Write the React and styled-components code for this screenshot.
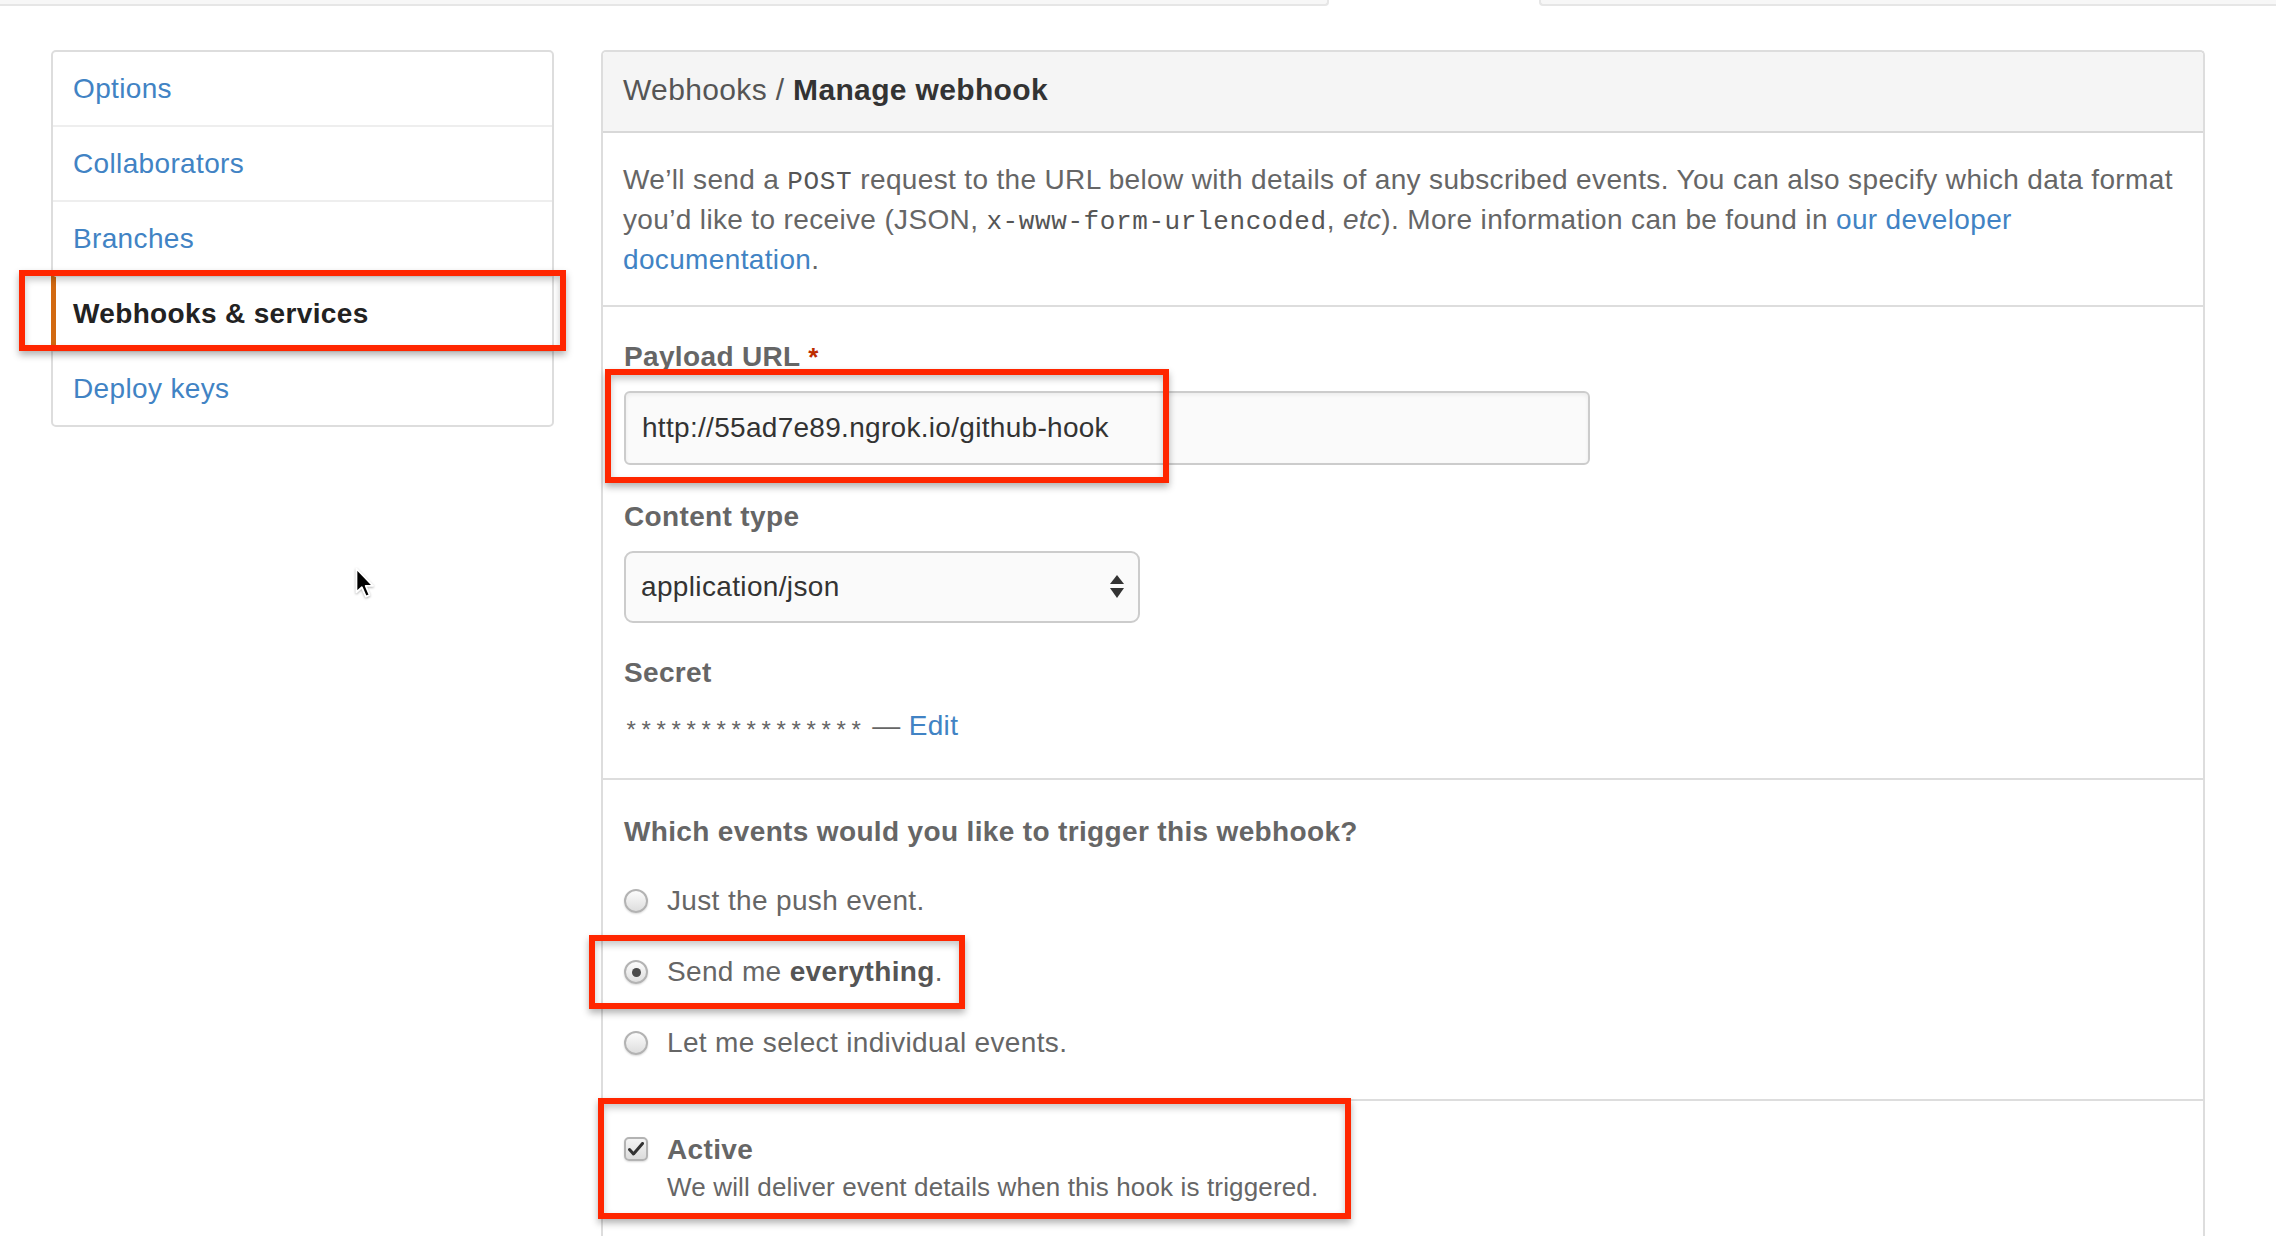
import React from 'react';
import styled, {createGlobalStyle} from 'styled-components';

const GlobalStyle = createGlobalStyle`
  html, body {
    margin: 0;
    padding: 0;
    background: #fff;
  }
  body {
    font-family: "Liberation Sans", Arial, sans-serif;
    font-size: 28px;
    letter-spacing: 0.35px;
    color: #666;
  }
  * {
    box-sizing: border-box;
  }
`;

const navItems = ['Options', 'Collaborators', 'Branches', 'Webhooks & services', 'Deploy keys'];

const App = () => {
    return (
        <Page>
            <GlobalStyle/>
            <TabEdge>
                <TabPiece $side='left'/>
                <TabPiece $side='right'/>
            </TabEdge>
            <Layout>
                <SideMenu>
                    {navItems.map((item, i) => (
                        <NavItem key={item} $selected={i === 3}>
                            {item}
                            {i === 3 && <Annotation $left={-37} $top={-7} $width={547} $height={81}/>}
                        </NavItem>
                    ))}
                </SideMenu>

                <Panel>
                    <PanelHeader>
                        <span>Webhooks /&nbsp;</span><strong>Manage webhook</strong>
                    </PanelHeader>

                    <Section $pad='28px 21px 27px 20px'>
                        <Description>
                            We’ll send a <Code>POST</Code> request to the URL below with details of any subscribed
                            events. You can also specify which data format you’d like to receive
                            (JSON, <Code>x-www-form-urlencoded</Code>, <em>etc</em>). More information can be found
                            in <Link>our developer documentation</Link>.
                        </Description>
                    </Section>

                    <Section $pad='31px 21px 33px'>
                        <Field $gap={33}>
                            <Label>Payload URL <Required>*</Required></Label>
                            <Anchor>
                                <TextInput readOnly value='http://55ad7e89.ngrok.io/github-hook'/>
                                <Annotation $left={-19} $top={-22} $width={564} $height={114}/>
                            </Anchor>
                        </Field>
                        <Field $gap={31}>
                            <Label>Content type</Label>
                            <SelectBox>
                                <span>application/json</span>
                                <svg width='14' height='24' viewBox='0 0 14 24'>
                                    <polygon points='7,0 14,9 0,9' fill='#333'/>
                                    <polygon points='0,13 14,13 7,23' fill='#333'/>
                                </svg>
                            </SelectBox>
                        </Field>
                        <Field $gap={0}>
                            <Label>Secret</Label>
                            <SecretRow>
                                <Stars>****************</Stars>&nbsp;—&nbsp;<Link>Edit</Link>
                            </SecretRow>
                        </Field>
                    </Section>

                    <Section $pad='33px 21px 37px'>
                        <Question>Which events would you like to trigger this webhook?</Question>
                        <ChoiceList>
                            <Choice>
                                <Radio/>
                                <span>Just the push event.</span>
                            </Choice>
                            <Choice>
                                <Radio $checked/>
                                <span>Send me <b>everything</b>.</span>
                                <Annotation $left={-35} $top={-18} $width={376} $height={74}/>
                            </Choice>
                            <Choice>
                                <Radio/>
                                <span>Let me select individual events.</span>
                            </Choice>
                        </ChoiceList>
                    </Section>

                    <Section $pad='30px 21px 80px' $last>
                        <ActiveRow>
                            <CheckBox>
                                <svg width='16' height='14' viewBox='0 0 16 14'>
                                    <path d='M1.5 7.5 L5.5 12 L14.5 1.5' stroke='#333' strokeWidth='3'
                                          fill='none' strokeLinecap='round' strokeLinejoin='round'/>
                                </svg>
                            </CheckBox>
                            <div>
                                <ActiveTitle>Active</ActiveTitle>
                                <Hint>We will deliver event details when this hook is triggered.</Hint>
                            </div>
                            <Annotation $left={-26} $top={-33} $width={753} $height={121}/>
                        </ActiveRow>
                    </Section>
                </Panel>
            </Layout>

            <Cursor width='20' height='32' viewBox='0 0 14 22'>
                <path d='M1 1 L1 17.5 L4.8 14 L7.6 20.5 L10.2 19.4 L7.5 13 L12.6 13 Z'
                      fill='#000' stroke='#fff' strokeWidth='1.3' strokeLinejoin='round'/>
            </Cursor>
        </Page>
    );
};

const Page = styled.div`
  position: relative;
  width: 2276px;
  height: 1236px;
  overflow: hidden;
`

const TabEdge = styled.div`
  display: flex;
  gap: 210px;
  height: 6px;
`

const TabPiece = styled.div`
  height: 6px;
  background: #f7f7f7;
  border-bottom: 2px solid #e6e6e6;
  width: ${p => p.$side === 'left' ? '1329px' : 'auto'};
  flex: ${p => p.$side === 'left' ? 'none' : '1'};
  border-right: ${p => p.$side === 'left' ? '2px solid #e6e6e6' : 'none'};
  border-left: ${p => p.$side === 'right' ? '2px solid #e6e6e6' : 'none'};
  border-bottom-right-radius: ${p => p.$side === 'left' ? '4px' : '0'};
  border-bottom-left-radius: ${p => p.$side === 'right' ? '4px' : '0'};
`

const Layout = styled.div`
  display: flex;
  align-items: flex-start;
  gap: 47px;
  padding: 44px 0 0 51px;
`

const SideMenu = styled.nav`
  width: 503px;
  border: 2px solid #ddd;
  border-radius: 5px;
`

const NavItem = styled.div`
  position: relative;
  display: flex;
  align-items: center;
  height: 75px;
  padding-left: ${p => p.$selected ? '17px' : '20px'};
  margin-left: ${p => p.$selected ? '-2px' : '0'};
  border-top: 2px solid #eee;
  border-left: ${p => p.$selected ? '5px solid #d26911' : 'none'};
  color: ${p => p.$selected ? '#222' : '#4183c4'};
  font-weight: ${p => p.$selected ? 'bold' : 'normal'};

  &:first-child {
    border-top: none;
    height: 73px;
  }
`

const Annotation = styled.span`
  position: absolute;
  left: ${p => p.$left}px;
  top: ${p => p.$top}px;
  width: ${p => p.$width}px;
  height: ${p => p.$height}px;
  border: 6px solid #ff2600;
  box-shadow: 0 4px 7px rgba(0, 0, 0, 0.3), inset 0 4px 7px rgba(0, 0, 0, 0.22);
  pointer-events: none;
  z-index: 2;
`

const Panel = styled.section`
  width: 1604px;
  border: 2px solid #ddd;
  border-bottom: none;
  border-radius: 5px 5px 0 0;
`

const PanelHeader = styled.h3`
  display: flex;
  align-items: center;
  margin: 0;
  height: 81px;
  padding: 0 20px 4px;
  background: #f5f5f5;
  border-bottom: 2px solid #d8d8d8;
  border-radius: 4px 4px 0 0;
  font-size: 30px;
  font-weight: normal;
  color: #555;

  strong {
    color: #333;
  }
`

const Section = styled.div`
  padding: ${p => p.$pad};
  border-bottom: ${p => p.$last ? 'none' : '2px solid #ddd'};
`

const Description = styled.p`
  margin: 0;
  line-height: 37px;
  color: #666;
`

const Code = styled.code`
  font-family: "Liberation Mono", "DejaVu Sans Mono", monospace;
  font-size: 26px;
  letter-spacing: 0.6px;
  color: #555;
`

const Link = styled.a`
  color: #4183c4;
  text-decoration: none;
`

const Field = styled.div`
  margin-bottom: ${p => p.$gap}px;
`

const Label = styled.label`
  display: block;
  line-height: 38px;
  margin-bottom: 15px;
  font-weight: bold;
  color: #666;
`

const Required = styled.span`
  color: #bd2c00;
  font-size: 26px;
`

const Anchor = styled.div`
  position: relative;
  width: 966px;
`

const TextInput = styled.input`
  display: block;
  width: 966px;
  height: 74px;
  padding: 0 16px;
  border: 2px solid #ccc;
  border-radius: 6px;
  background: #fafafa;
  box-shadow: inset 0 2px 4px rgba(0, 0, 0, 0.06);
  font-family: "Liberation Sans", Arial, sans-serif;
  font-size: 28px;
  letter-spacing: 0.3px;
  color: #333;
  outline: none;
`

const SelectBox = styled.div`
  display: flex;
  align-items: center;
  justify-content: space-between;
  width: 516px;
  height: 72px;
  padding: 0 14px 0 15px;
  border: 2px solid #ccc;
  border-radius: 9px;
  background: #fafafa;
  color: #333;
`

const SecretRow = styled.div`
  height: 38px;
  line-height: 38px;
  color: #666;
  white-space: nowrap;
`

const Stars = styled.span`
  font-family: "Liberation Mono", "DejaVu Sans Mono", monospace;
  font-size: 24px;
  letter-spacing: 0.6px;
  vertical-align: -4px;
`

const Question = styled.div`
  line-height: 38px;
  font-weight: bold;
  color: #666;
  margin-bottom: 31px;
`

const ChoiceList = styled.div`
  display: flex;
  flex-direction: column;
  gap: 33px;
`

const Choice = styled.label`
  position: relative;
  display: flex;
  align-items: center;
  gap: 19px;
  line-height: 38px;
  color: #666;

  b {
    color: #555;
  }
`

const Radio = styled.span`
  display: flex;
  align-items: center;
  justify-content: center;
  width: 24px;
  height: 24px;
  border-radius: 50%;
  border: 2px solid #b3b3b3;
  background: linear-gradient(#fcfcfc, #dedede);
  box-shadow: 0 1px 2px rgba(0, 0, 0, 0.15);

  &::after {
    content: '';
    display: ${p => p.$checked ? 'block' : 'none'};
    width: 9px;
    height: 9px;
    border-radius: 50%;
    background: #4a4a4a;
  }
`

const ActiveRow = styled.div`
  position: relative;
  display: flex;
  align-items: flex-start;
  gap: 19px;
`

const CheckBox = styled.span`
  display: flex;
  align-items: center;
  justify-content: center;
  flex: none;
  width: 24px;
  height: 24px;
  margin-top: 6px;
  border-radius: 5px;
  border: 2px solid #b3b3b3;
  background: linear-gradient(#f4f4f4, #dcdcdc);
  box-shadow: 0 1px 2px rgba(0, 0, 0, 0.15);
`

const ActiveTitle = styled.div`
  line-height: 38px;
  font-weight: bold;
  color: #666;
`

const Hint = styled.div`
  line-height: 36px;
  font-size: 26px;
  letter-spacing: 0.15px;
  color: #666;
`

const Cursor = styled.svg`
  position: absolute;
  left: 355px;
  top: 567px;
  filter: drop-shadow(0 1px 1px rgba(0, 0, 0, 0.3));
`

export default App;
